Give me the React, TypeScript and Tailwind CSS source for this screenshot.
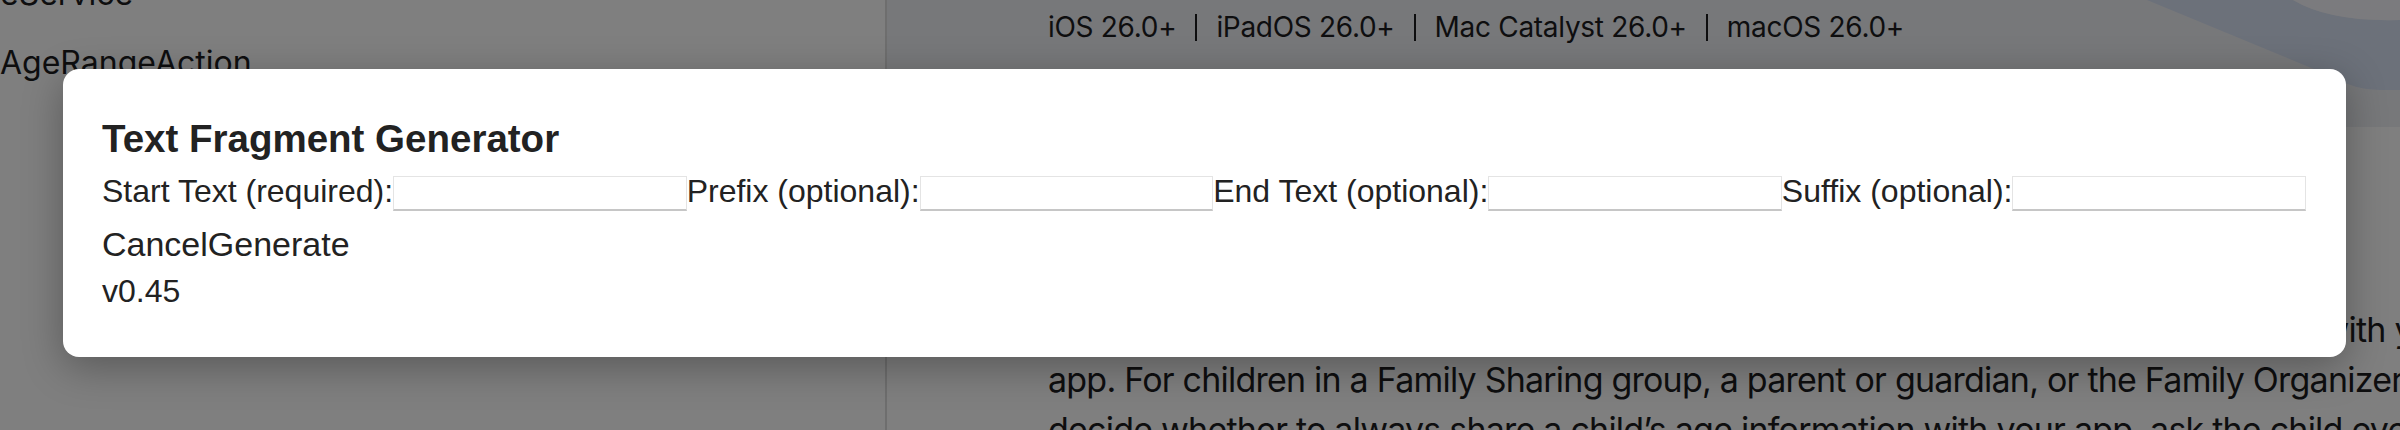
import React from 'react';

const platforms = ['iOS 26.0+', 'iPadOS 26.0+', 'Mac Catalyst 26.0+', 'macOS 26.0+'];

const fields = [
  { id: 'start', label: 'Start Text (required):' },
  { id: 'prefix', label: 'Prefix (optional):' },
  { id: 'end', label: 'End Text (optional):' },
  { id: 'suffix', label: 'Suffix (optional):' },
];

function HeaderArc() {
  // decorative ring in the top right of the doc header
  return (
    <svg className="absolute right-0 top-0" width="260" height="127" viewBox="0 0 260 127">
      <path d="M7 0 L193 77 Q215 90 240 90 L260 90 L260 20 Q190 22 153 0 Z" fill="#d8e2f4" />
      <path d="M153 0 Q190 22 260 20 L260 0 Z" fill="#f6f6fc" />
    </svg>
  );
}

function DocPage() {
  return (
    <div className="flex h-full font-['Inter',sans-serif] text-[#1d1d1f]">
      <aside className="w-[887px] shrink-0 overflow-hidden border-r-2 border-[#dcdcdc] bg-white">
        <div className="-mt-[41px] flex flex-col text-[32px] leading-[69px]">
          <span>eService</span>
          <span>AgeRangeAction</span>
        </div>
      </aside>

      <main className="min-w-0 flex-1 overflow-hidden bg-white">
        <div className="relative h-[127px] bg-[#eff0f5] pl-[161px] pt-[10px]">
          <HeaderArc />
          <div className="relative flex items-center gap-[19px] text-[28px] leading-[34px] tracking-[-0.3px]">
            {platforms.map((p, i) => (
              <React.Fragment key={p}>
                {i > 0 && <span className="h-[27px] w-[2px] bg-[#1d1d1f]" />}
                <span className="whitespace-nowrap">{p}</span>
              </React.Fragment>
            ))}
          </div>
        </div>

        <section className="pl-[161px] pt-[60px]">
          <h2 className="text-[56px] font-bold leading-[64px]">Overview</h2>
          <div className="mt-[4px] whitespace-nowrap text-[34px] leading-[50px] tracking-[-0.78px]">
            <p>The Declared Age Range framework lets you ask people to share an age range, so</p>
            <p>you can tailor the experience to people and request that they share their age range with your</p>
            <p>app. For children in a Family Sharing group, a parent or guardian, or the Family Organizer can</p>
            <p>decide whether to always share a child’s age information with your app, ask the child every time, or never share it.</p>
          </div>
        </section>
      </main>
    </div>
  );
}

function FragmentDialog() {
  return (
    <div className="absolute left-[63px] top-[69px] flex h-[288px] w-[2283px] flex-col rounded-2xl bg-white pl-[39px] pr-[40px] pt-[48px] font-['Liberation_Sans',Arial,sans-serif] text-[#222] shadow-[0_10px_40px_rgba(0,0,0,0.3)]">
      <h1 className="text-[38.5px] font-bold leading-[44px]">Text Fragment Generator</h1>

      <div className="mt-[14px] flex items-start">
        {fields.map((f) => (
          <React.Fragment key={f.id}>
            <label htmlFor={f.id} className="shrink-0 whitespace-nowrap text-[32px] leading-8">
              {f.label}
            </label>
            <input
              id={f.id}
              type="text"
              className="mt-px h-[35px] min-w-0 flex-1 border border-[#e4e4e4] border-b-2 border-b-[#c6c6c6] bg-white"
            />
          </React.Fragment>
        ))}
      </div>

      <div className="mt-[17px] flex">
        <button className="text-[34px] leading-8">Cancel</button>
        <button className="text-[34px] leading-8">Generate</button>
      </div>

      <div className="mt-[15px] text-[32px] leading-8">v0.45</div>
    </div>
  );
}

export default function App() {
  return (
    <div className="relative h-[430px] w-[2400px] overflow-hidden bg-white">
      <DocPage />
      <div className="absolute inset-0 bg-black/50" />
      <FragmentDialog />
    </div>
  );
}
